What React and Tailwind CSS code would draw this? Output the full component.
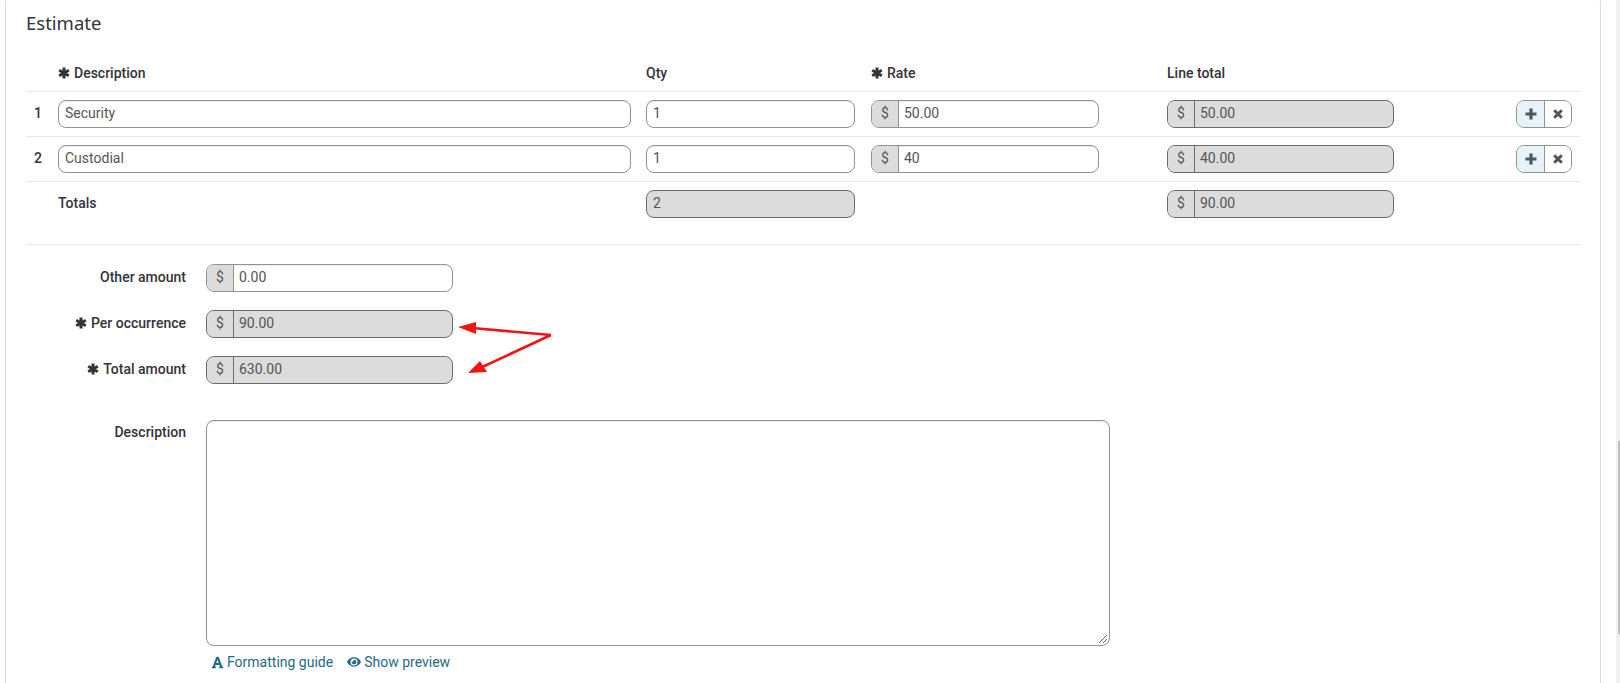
import React from "react";
import { FaFont, FaEye } from "react-icons/fa";

const Req = () => (
  <svg className="inline-block w-[12px] h-[12px] mr-[4px] align-[-1px]" viewBox="0 0 12 12">
    <path d="M6 0.5 V11.5 M1.2 3.2 L10.8 8.8 M1.2 8.8 L10.8 3.2" stroke="#33333a" strokeWidth="3" fill="none" />
  </svg>
);

function Money({ value, disabled, width = "w-[227px]" }) {
  return (
    <div className={`flex h-[28px] ${width} rounded-[8px] border overflow-hidden ${disabled ? "border-[#6b6b6b] bg-[#dcdcdc]" : "border-[#8e9393] bg-white shadow-[inset_0_1px_1px_rgba(0,0,0,0.075)]"}`}>
      <div className={`w-[27px] shrink-0 flex items-center justify-center pb-[2px] border-r bg-[#dcdcdc] text-[#555] ${disabled ? "border-[#6b6b6b]" : "border-[#8e9393]"}`}>$</div>
      <div className="flex-1 flex items-center pl-[5px] pb-[2px] text-[#555]">{value}</div>
    </div>
  );
}

function TextBox({ value, disabled, width }) {
  return (
    <div className={`flex items-center h-[28px] ${width} rounded-[8px] border pl-[6px] pb-[2px] text-[#555] ${disabled ? "border-[#6b6b6b] bg-[#dcdcdc]" : "border-[#8e9393] bg-white shadow-[inset_0_1px_1px_rgba(0,0,0,0.075)]"}`}>
      {value}
    </div>
  );
}

const cols = "grid grid-cols-[32px_588px_225px_296px_349px_56px]";

function Row({ n, desc, qty, rate, total }) {
  return (
    <div className={`${cols} h-[45px] pt-[8px] border-t border-[#e6e8e8]`}>
      <div className="h-[28px] pl-[8px] pb-[2px] flex items-center font-medium text-[#33333a]">{n}</div>
      <TextBox value={desc} width="w-[573px]" />
      <TextBox value={qty} width="w-[209px]" />
      <Money value={rate} width="w-[228px]" />
      <Money value={total} disabled />
      <div className="flex h-[28px] w-[56px] rounded-[8px] border border-[#8e9393] overflow-hidden">
        <div className="w-[28px] flex items-center justify-center bg-[#e6f3f8] border-r border-[#8e9393]">
          <svg className="w-[12px] h-[12px]" viewBox="0 0 12 12">
            <path d="M6 0.5 V11.5 M0.5 6 H11.5" stroke="#4a5a62" strokeWidth="3.2" fill="none" />
          </svg>
        </div>
        <div className="flex-1 flex items-center justify-center bg-white">
          <svg className="w-[10px] h-[10px]" viewBox="0 0 10 10">
            <path d="M1.2 1.2 L8.8 8.8 M8.8 1.2 L1.2 8.8" stroke="#555" strokeWidth="3" fill="none" />
          </svg>
        </div>
      </div>
    </div>
  );
}

function FormRow({ label, req, value, disabled }) {
  return (
    <div className="flex h-[28px] mb-[18px]">
      <div className="w-[160px] flex items-center justify-end pb-[2px] font-medium text-[#33333a]">
        <span>{req && <Req />}{label}</span>
      </div>
      <div className="ml-[20px]">
        <Money value={value} disabled={disabled} width="w-[247px]" />
      </div>
    </div>
  );
}

export default function App() {
  return (
    <div className="flex h-[683px] w-[1620px] overflow-hidden bg-white text-[14px] leading-[20px]" style={{ fontFamily: "Roboto, sans-serif" }}>
      <div className="relative ml-[5px] w-[1596px] h-[700px] -mt-[6px] border border-[#dcdcdc] rounded-[8px] pl-[20px] pt-[6px]">
        <h2 className="h-[61px] pt-[9px] text-[18.5px] leading-[26px] text-[#33333a]" style={{ fontFamily: "'Noto Sans', sans-serif" }}>Estimate</h2>

        <div className="w-[1554px]">
          <div className={`${cols} h-[29px] pt-[1px] font-medium text-[#33333a]`}>
            <div />
            <div><Req />Description</div>
            <div>Qty</div>
            <div><Req />Rate</div>
            <div>Line total</div>
            <div />
          </div>
          <Row n="1" desc="Security" qty="1" rate="50.00" total="50.00" />
          <Row n="2" desc="Custodial" qty="1" rate="40" total="40.00" />
          <div className={`${cols} h-[64px] pt-[8px] border-t border-b border-[#e6e8e8]`}>
            <div />
            <div className="h-[28px] pb-[2px] flex items-center font-medium text-[#33333a]">Totals</div>
            <TextBox value="2" width="w-[209px]" disabled />
            <div />
            <Money value="90.00" disabled />
            <div />
          </div>
        </div>

        <div className="pt-[19px]">
          <FormRow label="Other amount" value="0.00" />
          <FormRow req label="Per occurrence" value="90.00" disabled />
          <FormRow req label="Total amount" value="630.00" disabled />

          <div className="flex mt-[36px]">
            <div className="w-[160px] pt-[2px] text-right font-medium text-[#33333a]">Description</div>
            <div className="ml-[20px]">
              <div className="relative w-[904px] h-[226px] rounded-[8px] border border-[#8e9393] bg-white shadow-[inset_0_1px_1px_rgba(0,0,0,0.075)]">
                <svg className="absolute right-[1px] bottom-[1px]" width="10" height="10" viewBox="0 0 10 10">
                  <path d="M1 9 L9 1 M5 9 L9 5" stroke="#666" strokeWidth="1" />
                </svg>
              </div>
              <div className="flex items-center mt-[6px] text-[#1f6a85]">
                <FaFont className="w-[13px] h-[13px] ml-[5px] mr-[3px]" />
                <span>Formatting guide</span>
                <FaEye className="w-[14px] h-[14px] ml-[14px] mr-[3px]" />
                <span>Show preview</span>
              </div>
            </div>
          </div>
        </div>

        <svg className="absolute pointer-events-none top-[5px] -left-[6px]" width="600" height="400" viewBox="0 0 600 400">
          <path d="M551 335 L472 328" stroke="#f01414" strokeWidth="2.6" fill="none" />
          <path d="M551 335 L478 369" stroke="#f01414" strokeWidth="2.6" fill="none" />
          <polygon points="458,327 476,322 476,334" fill="#f01414" />
          <polygon points="468,373 480,361 487,372" fill="#f01414" />
        </svg>
      </div>
      <div className="ml-[15px] w-[4px] h-[683px] bg-[#f1f1f1] flex justify-end">
        <div className="w-[2px] h-[193px] mt-[441px] bg-[#c1c1c1]" />
      </div>
    </div>
  );
}
